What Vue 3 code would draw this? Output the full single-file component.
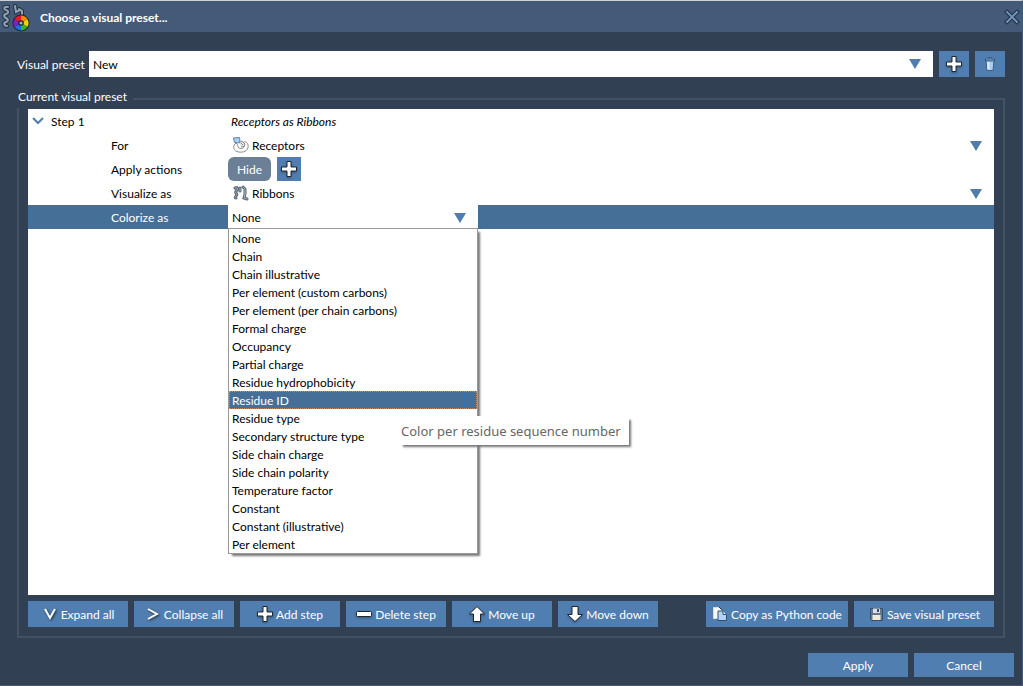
<script setup>
import { ref } from 'vue'

const preset = ref('New')
const target = ref('Receptors')
const shape = ref('Ribbons')
const colorize = ref('None')
const hovered = ref('Residue ID')

const colorOptions = [
  'None',
  'Chain',
  'Chain illustrative',
  'Per element (custom carbons)',
  'Per element (per chain carbons)',
  'Formal charge',
  'Occupancy',
  'Partial charge',
  'Residue hydrophobicity',
  'Residue ID',
  'Residue type',
  'Secondary structure type',
  'Side chain charge',
  'Side chain polarity',
  'Temperature factor',
  'Constant',
  'Constant (illustrative)',
  'Per element',
]

const plusPath = 'M6 .5h4V6h5.500v4H10v5.500H6V10H.5V6H6z'
</script>

<template>
  <main class="dialog">
    <header class="titlebar">
      <svg class="app-icon" width="30" height="28" viewBox="0 0 30 28" aria-hidden="true">
        <g fill="none" stroke-linecap="round">
          <path d="M8 3C4 2 3 5 6 6s3 3 0 4-2 3 0 4 3 3 0 4-2 4 1 4M15 2l1 6 4-2M19 5l3 2v3" stroke="#26303d" stroke-width="4" />
          <path d="M8 3C4 2 3 5 6 6s3 3 0 4-2 3 0 4 3 3 0 4-2 4 1 4M15 2l1 6 4-2M19 5l3 2v3" stroke="#8ea2b5" stroke-width="2" />
        </g>
        <circle cx="21" cy="19" r="8.500" fill="#1b2029" />
        <path d="M21 19V11.500a7.500 7.500 0 0 1 6.500 3.700z" fill="#f58a00" />
        <path d="M21 19l6.500-3.800a7.500 7.500 0 0 1 0 7.600z" fill="#e8d400" />
        <path d="M21 19l6.500 3.800a7.500 7.500 0 0 1-6.500 3.700z" fill="#38b52d" />
        <path d="M21 19v7.500a7.500 7.500 0 0 1-6.500-3.700z" fill="#1b6fe0" />
        <path d="M21 19l-6.500 3.800a7.500 7.500 0 0 1 0-7.600z" fill="#8020c8" />
        <path d="M21 19l-6.500-3.800a7.500 7.500 0 0 1 6.500-3.700z" fill="#e21c24" />
        <circle cx="21" cy="19" r="2.800" fill="#1b2029" />
        <circle cx="21" cy="19" r="1.500" fill="#a9b4c0" />
      </svg>
      <h1>Choose a visual preset...</h1>
      <button class="close" type="button" aria-label="Close">
        <svg width="16" height="16" viewBox="0 0 16 16">
          <path d="M3 3l10 10M13 3L3 13" stroke="#202b3a" stroke-width="4" stroke-linecap="square" />
          <path d="M3 3l10 10M13 3L3 13" stroke="#7095bf" stroke-width="2" stroke-linecap="square" />
        </svg>
      </button>
    </header>

    <div class="body">
      <div class="preset-row">
        <label for="preset">Visual preset</label>
        <span class="combo preset-combo">
          <select id="preset" v-model="preset"><option>New</option></select>
          <svg class="arrow" width="12" height="10" viewBox="0 0 12 10"><path d="M0 0h12L6 10z" fill="#4f7db0" /></svg>
        </span>
        <button class="square" type="button" aria-label="Add preset">
          <svg class="glyph" width="16" height="16" viewBox="0 0 16 16"><path :d="plusPath" /></svg>
        </button>
        <button class="square" type="button" aria-label="Delete preset">
          <svg width="16" height="16" viewBox="0 0 16 16">
            <path d="M4 5h8l-1 9.500H5z" fill="#a9cdf2" stroke="#3c5f88" />
            <path d="M5 6l.5 7.500h2V6z" fill="#dcebfb" />
            <path d="M6 3V1.500h4V3" fill="none" stroke="#3c5f88" />
            <path d="M3 4h10" stroke="#2b4767" stroke-width="2" />
            <path d="M4 4h8" stroke="#8fb6df" />
          </svg>
        </button>
      </div>

      <fieldset>
        <legend>Current visual preset</legend>
        <div class="steps">
          <div class="row">
            <button class="toggle" type="button" aria-expanded="true">
              <svg width="12" height="8" viewBox="0 0 12 8"><path d="M1 1l5 5 5-5" fill="none" stroke="#4f7db0" stroke-width="2" /></svg>
              <span>Step 1</span>
            </button>
            <em>Receptors as Ribbons</em>
          </div>

          <div class="row">
            <label class="name" for="target">For</label>
            <span class="combo">
              <svg class="lead" width="16" height="16" viewBox="0 0 16 16">
                <path d="M3 6C0 8-.5 13 4 14.500c4 1.500 10 .5 11-4 .8-4-2-6.500-4-5.500-1.500 1-.5 2 0 3 1 3-3 4.500-5 3S5.500 7.500 3 6z" fill="#fff" stroke="#8b8b8b" />
                <path d="M6 6l3-2 3 3-1 2.500-3 .5M8 6l2 2" fill="#e4e4e4" stroke="#8b8b8b" />
                <path d="M.5 1l6-.5L7 4 5.500 6 1.500 5.500z" fill="#a9cdf2" stroke="#5d83ad" />
              </svg>
              <select id="target" v-model="target" class="with-icon"><option>Receptors</option></select>
              <svg class="arrow" width="12" height="10" viewBox="0 0 12 10"><path d="M0 0h12L6 10z" fill="#4f7db0" /></svg>
            </span>
          </div>

          <div class="row">
            <span class="name">Apply actions</span>
            <div class="actions">
              <button class="pill" type="button">Hide</button>
              <button class="square small" type="button" aria-label="Add action">
                <svg class="glyph" width="16" height="16" viewBox="0 0 16 16"><path :d="plusPath" /></svg>
              </button>
            </div>
          </div>

          <div class="row">
            <label class="name" for="shape">Visualize as</label>
            <span class="combo">
              <svg class="lead" width="16" height="16" viewBox="0 0 16 16" fill="none" stroke-linecap="round">
                <path d="M2 3c2-1 3 0 2 2s-2 2-1 3 1 2 0 3-1 2 0 2M7 3v3M10 2l2 2v5M12 9l-1 4 3 1" stroke="#5b6874" stroke-width="3" />
                <path d="M2 3c2-1 3 0 2 2s-2 2-1 3 1 2 0 3-1 2 0 2M7 3v3M10 2l2 2v5M12 9l-1 4 3 1" stroke="#a3b3c1" stroke-width="1" />
              </svg>
              <select id="shape" v-model="shape" class="with-icon"><option>Ribbons</option></select>
              <svg class="arrow" width="12" height="10" viewBox="0 0 12 10"><path d="M0 0h12L6 10z" fill="#4f7db0" /></svg>
            </span>
          </div>

          <div class="row selected">
            <label class="name" for="colorize">Colorize as</label>
            <div class="combo editor">
              <select id="colorize" v-model="colorize">
                <option v-for="name in colorOptions" :key="name">{{ name }}</option>
              </select>
              <svg class="arrow" width="12" height="10" viewBox="0 0 12 10"><path d="M0 0h12L6 10z" fill="#4f7db0" /></svg>
              <ul class="menu" role="listbox" aria-label="Colorize as">
                <li
                  v-for="name in colorOptions"
                  :key="name"
                  role="option"
                  :aria-selected="name === hovered"
                  :class="{ current: name === hovered }"
                  @mouseenter="hovered = name"
                  @click="colorize = name"
                >{{ name }}</li>
              </ul>
              <div class="tip" role="tooltip">Color per residue sequence number</div>
            </div>
          </div>
        </div>

        <div class="toolbar">
          <button type="button">
            <svg class="line-glyph" width="16" height="16" viewBox="0 0 16 16"><path d="M3 3l5 9 5-9" /></svg>
            Expand all
          </button>
          <button type="button">
            <svg class="line-glyph" width="16" height="16" viewBox="0 0 16 16"><path d="M3 3l9 5-9 5" /></svg>
            Collapse all
          </button>
          <button type="button">
            <svg class="glyph" width="16" height="16" viewBox="0 0 16 16"><path :d="plusPath" /></svg>
            Add step
          </button>
          <button type="button">
            <svg class="glyph" width="16" height="16" viewBox="0 0 16 16"><rect x=".5" y="5.500" width="15" height="5" rx="1" /></svg>
            Delete step
          </button>
          <button type="button">
            <svg class="glyph" width="16" height="16" viewBox="0 0 16 16"><path d="M8 .5L15.500 8h-4v7.500h-7V8h-4z" /></svg>
            Move up
          </button>
          <button type="button">
            <svg class="glyph" width="16" height="16" viewBox="0 0 16 16"><path d="M8 15.500L.5 8.500h4.500v-8h6v8h4.500z" /></svg>
            Move down
          </button>
          <button class="copy" type="button">
            <svg width="16" height="16" viewBox="0 0 16 16">
              <path d="M1.500 1.500h6l2 2v9h-8z" fill="#f5f7f9" stroke="#d5dce4" />
              <path d="M7 1l3 3" stroke="#26384d" />
              <path d="M6 5h5l3.500 3.500V14.500H6z" fill="#b3d3f5" stroke="#35506e" />
              <path d="M11 5v3.500h3.500" fill="#e4f0fc" stroke="#35506e" />
            </svg>
            Copy as Python code
          </button>
          <button class="save" type="button">
            <svg width="16" height="16" viewBox="0 0 16 16">
              <path d="M2.500 2.500h12v12h-11l-1-1z" fill="#66788c" stroke="#35506e" />
              <path d="M5 2.500h7V7H5z" fill="#d8dfe6" />
              <path d="M9 3h2v3H9z" fill="#35506e" />
              <path d="M4.500 9h8v5h-8z" fill="#f0ecd9" />
            </svg>
            Save visual preset
          </button>
        </div>
      </fieldset>

      <footer>
        <button type="button">Apply</button>
        <button type="button">Cancel</button>
      </footer>
    </div>
  </main>
</template>

<style>
body {
  margin: 0;
  background: #324053;
}
</style>

<style scoped>
* {
  box-sizing: border-box;
}
.dialog {
  display: flex;
  flex-direction: column;
  min-height: 100vh;
  background: #324053;
  color: #fff;
  font: 12px/16px Lato, "Open Sans", sans-serif;
  border-top: 1px solid #ced2d2;
  border-right: 1px solid #435b78;
  border-bottom: 1px solid #435b78;
}
button,
select {
  margin: 0;
  padding: 0;
  border: 0;
  font: inherit;
  color: inherit;
}
.titlebar {
  display: flex;
  align-items: center;
  height: 31px;
  background: #435b78;
}
.app-icon {
  margin-top: 3px;
}
h1 {
  flex: 1;
  margin: 0 0 0 10px;
  padding-top: 2px;
  font-size: 12px;
  font-weight: 700;
  line-height: 16px;
}
.close {
  display: flex;
  margin-right: 2px;
  background: none;
}
.body {
  flex: 1;
  display: flex;
  flex-direction: column;
  padding: 19px 8px 8px 17px;
}
.preset-row {
  display: grid;
  grid-template-columns: 72px 1fr 36px 36px;
  align-items: center;
  margin-right: 9px;
}
.preset-row label {
  padding-top: 2px;
  white-space: nowrap;
}
.preset-row .square {
  margin-left: 6px;
}
.combo {
  position: relative;
  display: flex;
  flex: 1;
  height: 24px;
  color: #000;
}
.preset-combo {
  height: 26px;
  background: #fff;
}
select {
  flex: 1;
  min-width: 0;
  padding: 2px 32px 0 4px;
  appearance: none;
  background: transparent;
  outline: 0;
}
.with-icon {
  padding-left: 24px;
}
.lead {
  position: absolute;
  left: 5px;
  top: 4px;
}
.arrow {
  position: absolute;
  right: 12px;
  top: 8px;
  pointer-events: none;
}
.square {
  display: flex;
  align-items: center;
  justify-content: center;
  width: 30px;
  height: 26px;
  background: #507eb0;
}
.square.small {
  width: 24px;
  height: 24px;
}
.glyph {
  overflow: visible;
  fill: #fff;
  stroke: #1e2732;
  stroke-width: 1;
  stroke-linejoin: round;
  filter: drop-shadow(0 1px 1px #1e273280);
}
fieldset {
  flex: 1;
  min-width: 0;
  margin: 13px 9px 0 0;
  padding: 1px 9px 9px;
  border: 2px solid #435165;
}
legend {
  margin-left: -11px;
  padding: 0 6px 4px 1px;
  line-height: 14px;
  background: #324053;
}
.steps {
  min-height: calc(100vh - 200px);
  background: #fff;
  color: #000;
}
.row {
  display: grid;
  grid-template-columns: 200px 1fr;
  height: 24px;
  align-items: center;
}
.row em {
  padding: 2px 0 0 3px;
}
.name {
  padding: 2px 0 0 83px;
}
.toggle {
  display: flex;
  align-items: center;
  gap: 7px;
  padding-left: 4px;
  background: none;
}
.toggle span {
  padding-top: 2px;
}
.selected {
  background: #466f98;
  color: #fff;
}
.actions {
  display: flex;
  gap: 6px;
}
.pill {
  width: 43px;
  height: 24px;
  padding-top: 2px;
  border-radius: 6px;
  background: #6b8096;
  color: #fff;
}
.editor {
  width: 250px;
  background: #fff;
}
.menu {
  position: absolute;
  z-index: 1;
  top: 23px;
  left: 0;
  right: 0;
  margin: 0;
  padding: 0;
  list-style: none;
  background: #fff;
  border: 1px solid #999;
  box-shadow: 3px 3px 2px -1px #777;
}
.menu li {
  height: 18px;
  padding: 2px 0 0 3px;
}
.menu .current {
  background: #466f98;
  color: #fff;
  outline: 1px dotted #c98b5c;
  outline-offset: -1px;
}
.tip {
  position: absolute;
  z-index: 2;
  left: 171px;
  top: 211px;
  padding: 6px 8px 4px 2px;
  font: 13px/19px "Noto Sans", "Open Sans", sans-serif;
  color: #666;
  white-space: nowrap;
  background: #fff;
  box-shadow: 3px 3px 2px -1px #777;
}
.toolbar {
  display: flex;
  gap: 6px;
  margin-top: 6px;
}
.toolbar button,
footer button {
  display: flex;
  align-items: center;
  justify-content: center;
  gap: 3px;
  width: 100px;
  height: 26px;
  padding-top: 2px;
  background: #507eb0;
  color: #fff;
  white-space: nowrap;
}
.toolbar svg {
  flex: none;
  margin-bottom: 2px;
}
.line-glyph {
  fill: none;
  stroke: #fff;
  stroke-width: 2;
  filter: drop-shadow(1px 1px 1px #1e2732);
}
.toolbar .copy {
  width: 142px;
  margin-left: auto;
}
.toolbar .save {
  width: 140px;
}
footer {
  display: flex;
  justify-content: flex-end;
  gap: 6px;
  margin-top: 15px;
}
footer button {
  height: 24px;
}
</style>
